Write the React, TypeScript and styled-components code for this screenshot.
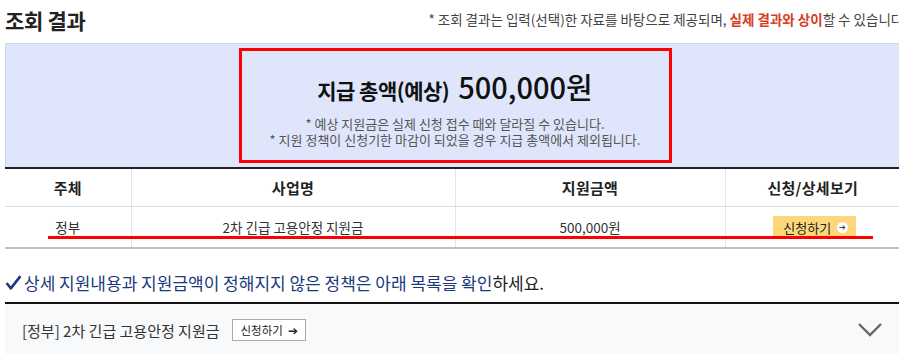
import styled, { createGlobalStyle } from "styled-components";

const Global = createGlobalStyle`
  html, body {
    margin: 0;
    padding: 0;
    background: #fff;
    overflow: hidden;
  }
  body {
    font-family: "Noto Sans CJK KR", "Noto Sans", sans-serif;
    color: #333;
  }
`

const Page = styled.div`
  width: 899px;
  height: 354px;
  padding-left: 5px;
  box-sizing: border-box;
  overflow: hidden;
`

const TitleBar = styled.div`
  display: flex;
  justify-content: space-between;
  align-items: center;
  height: 43px;
  white-space: nowrap;
`

const Title = styled.h2`
  margin: 0 0 3px 0;
  font-size: 21px;
  font-weight: 700;
  color: #222;
  letter-spacing: -0.3px;
`

const Note = styled.p`
  margin: 0 -8px 6px 0;
  font-size: 13.5px;
  color: #444;
`

const Em = styled.span`
  color: #d6401f;
  font-weight: 700;
`

const Summary = styled.section`
  background: #dfe6fc;
  border-top: 1px solid #ccd6f4;
  border-left: 1px solid #ccd6f4;
  display: flex;
  justify-content: center;
  padding: 4px 0;
  height: 115px;
`

const Highlight = styled.div`
  width: 433px;
  margin-left: 5px;
  border: 3.5px solid #f00;
  display: flex;
  flex-direction: column;
  align-items: center;
  padding-top: 14px;
  box-sizing: border-box;
`

const Total = styled.div`
  display: flex;
  align-items: baseline;
  gap: 9px;
  color: #111;
  margin-bottom: 9px;
`

const TotalLabel = styled.span`
  font-size: 21px;
  font-weight: 700;
  letter-spacing: -0.5px;
`

const TotalValue = styled.span`
  font-size: 29px;
  font-weight: 500;
`

const SmallNote = styled.p`
  margin: 0;
  font-size: 13px;
  line-height: 16px;
  color: #555;
`

const TableWrap = styled.div`
  position: relative;
`

const Table = styled.table`
  width: 895px;
  border-collapse: collapse;
  table-layout: fixed;
  border-top: 2px solid #222;
  border-bottom: 2px solid #b8c2cc;
`

const Th = styled.th`
  height: 37px;
  padding: 0;
  font-size: 15px;
  font-weight: 700;
  color: #222;
  letter-spacing: 0.3px;
  border-bottom: 1px solid #d6dde3;
  border-left: 1px solid #e2e6ea;
  &:first-child { border-left: none; }
`

const Td = styled.td`
  height: 40px;
  padding: 0;
  font-size: 13.5px;
  text-align: center;
  color: #333;
  border-left: 1px solid #e2e6ea;
  &:first-child { border-left: none; }
`

const ApplyButton = styled.span`
  display: inline-flex;
  align-items: center;
  gap: 6px;
  background: #fdd87a;
  color: #222;
  font-size: 13px;
  height: 22px;
  padding: 0 8px 0 10px;
  box-sizing: border-box;
  margin-left: 4px;
`

const ArrowDot = styled.span`
  display: inline-flex;
  align-items: center;
  justify-content: center;
  width: 11px;
  height: 11px;
  border-radius: 50%;
  background: #fff;
  color: #444;
  font-size: 8px;
  line-height: 1;
`

const Underline = styled.div`
  position: absolute;
  left: 43px;
  width: 825px;
  top: 69px;
  height: 3px;
  background: #f00;
`

const CheckLine = styled.p`
  margin: 17px 0 0 0;
  font-size: 17px;
  color: #1a3a7c;
  display: flex;
  align-items: center;
  height: 32px;
  white-space: nowrap;
`

const Plain = styled.span`
  color: #222;
`

const Accordion = styled.div`
  margin-top: 4px;
  border-top: 2px solid #111;
  background: #f8f9fa;
  height: 54px;
  display: flex;
  align-items: center;
  justify-content: space-between;
  padding: 0 17px 0 17px;
  width: 895px;
  box-sizing: border-box;
`

const ItemTitle = styled.div`
  display: flex;
  align-items: center;
  gap: 12px;
  font-size: 15px;
  color: #333;
`

const OutlineButton = styled.span`
  display: inline-flex;
  align-items: center;
  gap: 5px;
  height: 22px;
  box-sizing: border-box;
  border: 1px solid #aaa;
  background: #fff;
  font-size: 11.5px;
  color: #222;
  padding: 0 7px 0 8px;
`

function CheckIcon() {
  return (
    <svg width="17" height="17" viewBox="0 0 16 16" style={{ marginRight: 2 }}>
      <path d="M1.5 8.5 L5.5 13.5 L14.5 2" stroke="#1a3a7c" strokeWidth="2.4" fill="none" strokeLinejoin="round" />
    </svg>
  )
}

function Chevron() {
  return (
    <svg width="26" height="16" viewBox="0 0 26 16">
      <path d="M2 2 L13 13 L24 2" stroke="#666" strokeWidth="2.4" fill="none" />
    </svg>
  )
}

export default function App() {
  return (
    <Page>
      <Global />
      <TitleBar>
        <Title>조회 결과</Title>
        <Note>* 조회 결과는 입력(선택)한 자료를 바탕으로 제공되며, <Em>실제 결과와 상이</Em>할 수 있습니다.</Note>
      </TitleBar>
      <Summary>
        <Highlight>
          <Total>
            <TotalLabel>지급 총액(예상)</TotalLabel>
            <TotalValue>500,000원</TotalValue>
          </Total>
          <SmallNote>* 예상 지원금은 실제 신청 접수 때와 달라질 수 있습니다.</SmallNote>
          <SmallNote>* 지원 정책이 신청기한 마감이 되었을 경우 지급 총액에서 제외됩니다.</SmallNote>
        </Highlight>
      </Summary>
      <TableWrap>
        <Table>
          <colgroup>
            <col style={{ width: 126 }} />
            <col style={{ width: 324 }} />
            <col style={{ width: 270 }} />
            <col style={{ width: 175 }} />
          </colgroup>
          <thead>
            <tr>
              <Th>주체</Th>
              <Th>사업명</Th>
              <Th>지원금액</Th>
              <Th>신청/상세보기</Th>
            </tr>
          </thead>
          <tbody>
            <tr>
              <Td>정부</Td>
              <Td>2차 긴급 고용안정 지원금</Td>
              <Td>500,000원</Td>
              <Td>
                <ApplyButton>신청하기 <ArrowDot>➔</ArrowDot></ApplyButton>
              </Td>
            </tr>
          </tbody>
        </Table>
        <Underline />
      </TableWrap>
      <CheckLine>
        <CheckIcon />
        상세 지원내용과 지원금액이 정해지지 않은 정책은 아래 목록을 확인<Plain>하세요.</Plain>
      </CheckLine>
      <Accordion>
        <ItemTitle>
          [정부] 2차 긴급 고용안정 지원금
          <OutlineButton>신청하기 <span>➔</span></OutlineButton>
        </ItemTitle>
        <Chevron />
      </Accordion>
    </Page>
  )
}
